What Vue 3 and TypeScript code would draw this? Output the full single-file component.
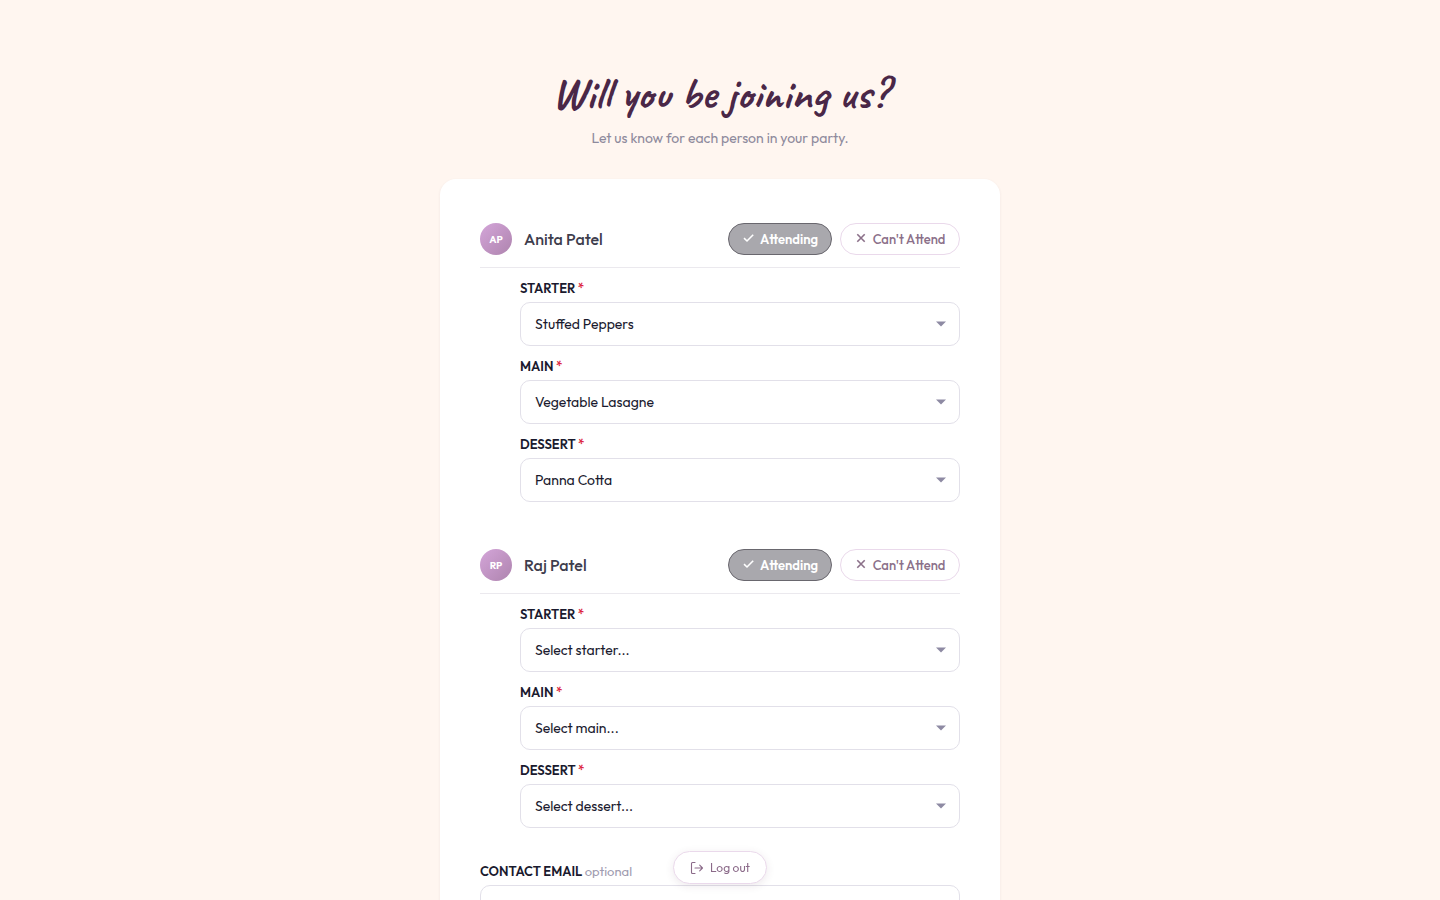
<script setup lang="ts">
import { reactive, ref } from 'vue'

type CourseKey = 'starter' | 'main' | 'dessert'

interface Guest {
  id: string
  initials: string
  name: string
  attending: boolean
  meals: Record<CourseKey, string>
}

const courses: { key: CourseKey; label: string; placeholder: string; options: string[] }[] = [
  { key: 'starter', label: 'STARTER', placeholder: 'Select starter...', options: ['Stuffed Peppers'] },
  { key: 'main', label: 'MAIN', placeholder: 'Select main...', options: ['Vegetable Lasagne'] },
  { key: 'dessert', label: 'DESSERT', placeholder: 'Select dessert...', options: ['Panna Cotta'] },
]

const guests = reactive<Guest[]>([
  {
    id: 'anita',
    initials: 'AP',
    name: 'Anita Patel',
    attending: true,
    meals: { starter: 'Stuffed Peppers', main: 'Vegetable Lasagne', dessert: 'Panna Cotta' },
  },
  {
    id: 'raj',
    initials: 'RP',
    name: 'Raj Patel',
    attending: true,
    meals: { starter: '', main: '', dessert: '' },
  },
])

const email = ref('')
</script>

<template>
  <main class="page">
    <header class="intro">
      <h1>Will you be joining us?</h1>
      <p>Let us know for each person in your party.</p>
    </header>

    <form class="card" @submit.prevent>
      <section v-for="guest in guests" :key="guest.id" class="guest">
        <div class="guest-row">
          <span class="avatar">{{ guest.initials }}</span>
          <span class="name">{{ guest.name }}</span>
          <div class="choices">
            <button
              type="button"
              class="choice yes"
              :class="{ selected: guest.attending }"
              :aria-pressed="guest.attending"
              @click="guest.attending = true"
            >
              <svg width="12" height="12" viewBox="0 0 12 12" aria-hidden="true">
                <path d="M2 6.2 5 9 11.2 2.8" />
              </svg>
              <span>Attending</span>
            </button>
            <button
              type="button"
              class="choice no"
              :class="{ selected: !guest.attending }"
              :aria-pressed="!guest.attending"
              @click="guest.attending = false"
            >
              <svg width="12" height="12" viewBox="0 0 12 12" aria-hidden="true">
                <path d="M2.3 2.3 9.7 9.7M9.7 2.3 2.3 9.7" />
              </svg>
              <span>Can't Attend</span>
            </button>
          </div>
        </div>
        <div v-if="guest.attending" class="meals">
          <div v-for="course in courses" :key="course.key" class="field">
            <label :for="`${guest.id}-${course.key}`">{{ course.label }} <span class="required">*</span></label>
            <div class="select-box">
              <select :id="`${guest.id}-${course.key}`" v-model="guest.meals[course.key]" required>
                <option value="">{{ course.placeholder }}</option>
                <option v-for="option in course.options" :key="option" :value="option">{{ option }}</option>
              </select>
              <svg class="caret" width="10" height="6" viewBox="0 0 10 6" aria-hidden="true">
                <path d="M0 .5H10L5 5.5Z" />
              </svg>
            </div>
          </div>
        </div>
      </section>

      <div class="field contact">
        <label for="email">CONTACT EMAIL <span class="optional">optional</span></label>
        <input id="email" v-model="email" type="email" />
      </div>
    </form>

    <button type="button" class="logout">
      <svg width="14" height="14" viewBox="0 0 14 14" aria-hidden="true">
        <path d="M5 1.5H2.5Q1.5 1.5 1.5 2.5V11.5Q1.5 12.5 2.5 12.5H5M5 7H12.5M9.7 4.2 12.5 7 9.7 9.8" />
      </svg>
      <span>Log out</span>
    </button>
  </main>
</template>

<style>
body {
  background: #fff6f0;
}
</style>

<style scoped>
.page {
  box-sizing: border-box;
  min-height: 100vh;
  padding: 64px 24px 80px;
  background: #fff6f0;
  color: #1a1a2e;
  font-family: Outfit, Lato, sans-serif;
  font-size: 14px;
}

.page * {
  box-sizing: border-box;
}

.intro {
  margin-bottom: 31px;
  text-align: center;
}

h1 {
  margin: 0;
  padding-bottom: 4px;
  color: #4a2747;
  font-family: Caveat, Lato, cursive;
  font-size: 45px;
  font-weight: 600;
  line-height: 60px;
}

.intro p {
  margin: 0;
  color: #8e8a9c;
  font-size: 14px;
  font-weight: 400;
  line-height: 20px;
}

.card {
  max-width: 560px;
  margin: 0 auto;
  padding: 32px 40px 40px;
  border-radius: 16px;
  background: #fff;
  box-shadow: 0 1px 3px rgba(74, 39, 71, 0.08);
}

.guest {
  margin-bottom: 35px;
}

.guest-row {
  display: flex;
  align-items: center;
  gap: 12px;
  padding: 12px 0;
  border-bottom: 1px solid #ebe9ee;
}

.avatar {
  display: flex;
  align-items: center;
  justify-content: center;
  width: 32px;
  height: 32px;
  border-radius: 50%;
  background: linear-gradient(135deg, #d4a5d9, #ae84ae);
  color: #fff;
  font-size: 10px;
  font-weight: 700;
}

.name {
  flex: 1;
  color: #3e3d4d;
  font-size: 16px;
  font-weight: 500;
}

.choices {
  display: flex;
  gap: 8px;
}

.choice {
  display: flex;
  align-items: center;
  justify-content: center;
  gap: 6px;
  width: 104px;
  height: 32px;
  padding: 0;
  border: 1px solid #ead9eb;
  border-radius: 16px;
  background: #fff;
  color: #8b7089;
  font-family: inherit;
  font-size: 13px;
  font-weight: 500;
  cursor: pointer;
}

.choice.no {
  width: 120px;
}

.choice.selected {
  border-color: #69676e;
  background: #a9a8ad;
  color: #fff;
  font-weight: 600;
}

.choice svg {
  margin-bottom: 3px;
  fill: none;
  stroke: currentColor;
  stroke-width: 1.6;
}

.meals {
  display: grid;
  gap: 12px;
  padding: 12px 0 0 40px;
}

.field label {
  display: block;
  height: 22px;
  font-size: 13px;
  font-weight: 600;
  line-height: 16px;
}

.required {
  color: #dc2640;
  font-weight: 500;
}

.optional {
  color: #a09cb0;
  font-weight: 400;
}

.select-box {
  position: relative;
}

select,
input {
  display: block;
  width: 100%;
  height: 44px;
  padding: 0 14px;
  border: 1px solid #e2e0e9;
  border-radius: 10px;
  background: #fff;
  color: #1a1a2e;
  font-family: inherit;
  font-size: 14px;
  font-weight: 400;
  appearance: none;
}

.caret {
  position: absolute;
  top: 19px;
  right: 14px;
  fill: #8e8aa3;
  pointer-events: none;
}

.logout {
  position: fixed;
  bottom: 16px;
  left: 50%;
  display: flex;
  align-items: center;
  justify-content: center;
  gap: 6px;
  width: 94px;
  height: 33px;
  padding: 0;
  border: 1px solid #ead9eb;
  border-radius: 17px;
  background: #fff;
  box-shadow: 0 2px 8px rgba(74, 39, 71, 0.1);
  color: #8b6a89;
  font-family: inherit;
  font-size: 12px;
  cursor: pointer;
  transform: translateX(-50%);
}

.logout svg {
  fill: none;
  stroke: currentColor;
  stroke-width: 1.1;
  stroke-linecap: round;
  stroke-linejoin: round;
}
</style>
